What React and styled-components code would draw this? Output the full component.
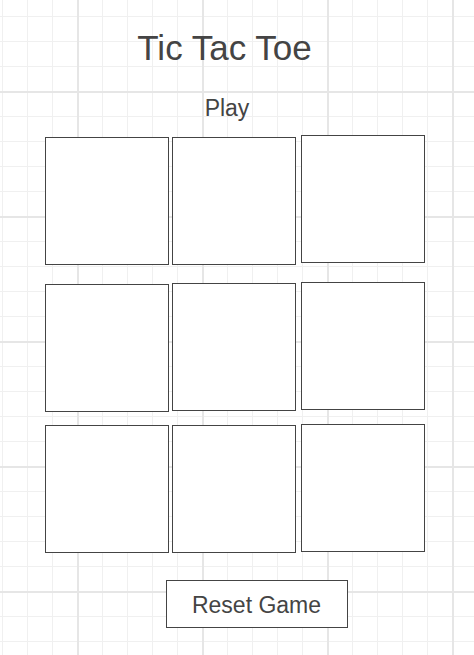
import React, { useState } from "react";
import styled, { createGlobalStyle } from "styled-components";

const GlobalStyle = createGlobalStyle`
  html, body {
    margin: 0;
    min-height: 100%;
  }
  body {
    font-family: "Liberation Sans", Arial, sans-serif;
    color: #444;
    background-color: #fff;
    background-image:
      linear-gradient(to right, #e6e6e6 2px, transparent 2px),
      linear-gradient(to bottom, #e6e6e6 2px, transparent 2px),
      linear-gradient(to right, #f0f0f0 1px, transparent 1px),
      linear-gradient(to bottom, #f0f0f0 1px, transparent 1px);
    background-size: 125px 125px, 125px 125px, 25px 25px, 25px 25px;
    background-position: 77px 0, 0 91px, 2px 0, 0 16px;
    min-height: 655px;
  }
`;

const Page = styled.main`
  display: flex;
  flex-direction: column;
  align-items: center;
  padding-top: 28px;
`;

const Title = styled.h1`
  margin: 0 25px 0 0;
  font-size: 35px;
  line-height: 40px;
  font-weight: 400;
  color: #444;
`;

const Status = styled.p`
  margin: 27px 20px 0 0;
  font-size: 23px;
  line-height: 26px;
  color: #444;
`;

const Board = styled.div`
  display: flex;
  flex-direction: column;
  margin: 14px 4px 0 0;
`;

const Row = styled.div`
  display: flex;
  align-items: flex-start;
  margin-top: ${(p) => p.$gap || 0}px;
`;

const Cell = styled.button`
  box-sizing: border-box;
  width: 124px;
  height: 128px;
  margin-top: ${(p) => p.$drop || 0}px;
  margin-left: ${(p) => p.$space || 0}px;
  padding: 0;
  border: 1px solid #444;
  background: #fff;
  font-family: "Liberation Sans", Arial, sans-serif;
  font-size: 64px;
  color: #444;
  cursor: pointer;
`;

const ResetButton = styled.button`
  box-sizing: border-box;
  width: 182px;
  height: 48px;
  margin: 27px 0 0 39px;
  padding: 2px 0 0;
  border: 1px solid #444;
  background: #fff;
  font-family: "Liberation Sans", Arial, sans-serif;
  font-size: 23px;
  color: #444;
  cursor: pointer;
`;

// small offsets seen in the original layout
const rows = [
  { gap: 0, drops: [2, 2, 0] },
  { gap: 17, drops: [2, 1, 0] },
  { gap: 12, drops: [1, 1, 0] },
];
const spaces = [0, 3, 5];

const App = () => {
  const [cells, setCells] = useState(Array(9).fill(""));
  const [xNext, setXNext] = useState(true);

  const play = (i) => {
    if (cells[i]) return;
    const next = cells.slice();
    next[i] = xNext ? "X" : "O";
    setCells(next);
    setXNext(!xNext);
  };

  return (
    <>
      <GlobalStyle />
      <Page>
        <Title>Tic Tac Toe</Title>
        <Status>Play</Status>
        <Board>
          {rows.map((row, r) => (
            <Row key={r} $gap={row.gap}>
              {row.drops.map((drop, c) => {
                const i = r * 3 + c;
                return (
                  <Cell
                    key={c}
                    $drop={drop}
                    $space={spaces[c]}
                    onClick={() => play(i)}
                  >
                    {cells[i]}
                  </Cell>
                );
              })}
            </Row>
          ))}
        </Board>
        <ResetButton onClick={() => setCells(Array(9).fill(""))}>
          Reset Game
        </ResetButton>
      </Page>
    </>
  );
};

export default App;
